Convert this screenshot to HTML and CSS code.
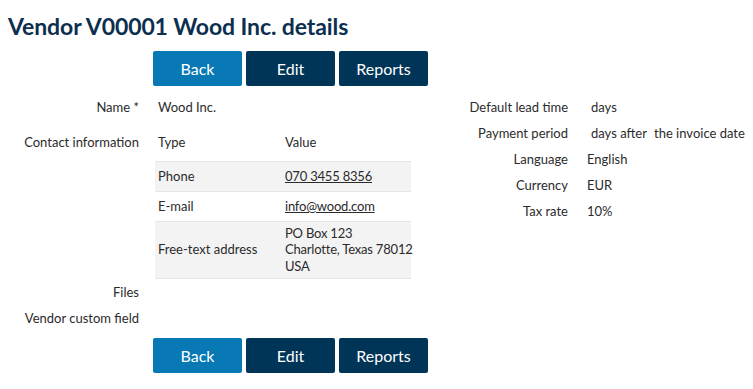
FILE: index.html
```html
<!DOCTYPE html>
<html lang="en">
<head>
  <meta charset="UTF-8">
  <title>Vendor V00001 Wood Inc. details</title>
  <link rel="stylesheet" href="styles.css">
</head>
<body>

<div class="page">
  <h1>Vendor V00001 Wood Inc. details</h1>

  <div class="actions">
    <button class="btn btn-back">Back</button>
    <button class="btn">Edit</button>
    <button class="btn">Reports</button>
  </div>

  <div class="details">
    <div class="form left">
      <div class="label">Name *</div>
      <div class="value">Wood Inc.</div>

      <div class="label label-top">Contact information</div>
      <div class="value-table">
        <table class="contacts">
          <thead>
            <tr><th>Type</th><th>Value</th></tr>
          </thead>
          <tbody>
            <tr class="odd"><td>Phone</td><td><a href="#">070 3455 8356</a></td></tr>
            <tr><td>E-mail</td><td><a href="#">info@wood.com</a></td></tr>
            <tr class="odd"><td>Free-text address</td><td>PO Box 123<br>Charlotte, Texas 78012<br>USA</td></tr>
          </tbody>
        </table>
      </div>

      <div class="label">Files</div>
      <div class="value"></div>

      <div class="label">Vendor custom field</div>
      <div class="value"></div>
    </div>

    <div class="form right">
      <div class="label">Default lead time</div>
      <div class="value indent">days</div>

      <div class="label">Payment period</div>
      <div class="value indent">days after <span class="after">the invoice date</span></div>

      <div class="label">Language</div>
      <div class="value">English</div>

      <div class="label">Currency</div>
      <div class="value">EUR</div>

      <div class="label">Tax rate</div>
      <div class="value">10%</div>
    </div>
  </div>

  <div class="actions actions-bottom">
    <button class="btn btn-back">Back</button>
    <button class="btn">Edit</button>
    <button class="btn">Reports</button>
  </div>
</div>

</body>
</html>
```

FILE: styles.css
```css
* { margin: 0; padding: 0; box-sizing: border-box; }
body { font-family: 'Lato', 'Liberation Sans', sans-serif; font-size: 13px; color: #2b2b2b; background: #fff; }
.page { padding: 0 8px; }
h1 { font-size: 23px; font-weight: 700; color: #0d2f4f; line-height: 26px; padding-top: 13px; letter-spacing: -0.1px; }

.actions { display: flex; gap: 4px; margin: 12px 0 0 145px; }
.actions-bottom { margin-top: 7px; }
.btn { width: 89px; height: 35px; border: none; border-radius: 2px; background: #003558; color: #fff; font-family: 'Lato', 'Liberation Sans', sans-serif; font-size: 16px; cursor: pointer; }
.btn-back { background: #0879b5; }

.details { display: flex; margin-top: 8px; }
.form { display: grid; align-items: center; }
.left { grid-template-columns: 131px 272px; column-gap: 16px; width: 432px; }
.right { grid-template-columns: 128px auto; column-gap: 19px; align-content: start; }
.label { text-align: right; height: 26px; line-height: 26px; white-space: nowrap; }
.label-top { align-self: start; margin-top: 9px; }
.value { height: 26px; line-height: 26px; padding-left: 3px; white-space: nowrap; }
.right .value { padding-left: 0; }
.right .indent { padding-left: 4px; }
.after { margin-left: 4px; }

.value-table { padding-top: 7px; }
.contacts { border-collapse: collapse; width: 256px; table-layout: fixed; }
.contacts th { font-weight: 400; text-align: left; height: 34px; padding: 0 3px 3px; }
.contacts td { height: 30px; padding: 0 3px; border-top: 1px solid #e6e6e6; line-height: 16.5px; white-space: nowrap; }
.contacts tbody tr:last-child td { border-bottom: 1px solid #e6e6e6; height: 57px; }
.contacts td:last-child { letter-spacing: -0.2px; }
.contacts th:first-child { width: 127px; }
.contacts .odd { background: #f3f3f3; }
.contacts a { color: #2b2b2b; text-decoration: underline; }
```
